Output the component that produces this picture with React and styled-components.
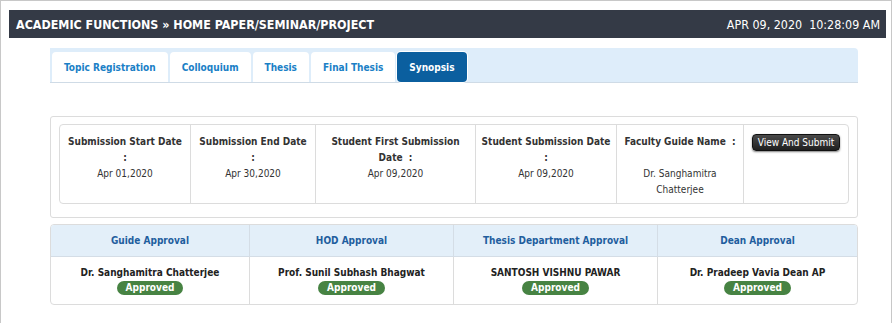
import React from 'react';
import styled, { createGlobalStyle } from 'styled-components';

const GlobalStyle = createGlobalStyle`
    body {
        margin: 0;
        background: #fff;
        font-family: "DejaVu Sans Condensed", "DejaVu Sans", Verdana, sans-serif;
        font-size: 10px;
        color: #333;
    }
`;

const tabs = ['Topic Registration', 'Colloquium', 'Thesis', 'Final Thesis', 'Synopsis'];

const approvals = [
    { title: 'Guide Approval', name: 'Dr. Sanghamitra Chatterjee' },
    { title: 'HOD Approval', name: 'Prof. Sunil Subhash Bhagwat' },
    { title: 'Thesis Department Approval', name: 'SANTOSH VISHNU PAWAR' },
    { title: 'Dean Approval', name: 'Dr. Pradeep Vavia Dean AP' },
];

const App = () => {
    return (
        <Frame>
            <GlobalStyle />
            <Header>
                <h1>ACADEMIC FUNCTIONS &raquo; HOME PAPER/SEMINAR/PROJECT</h1>
                <span>APR 09, 2020&nbsp;&nbsp;10:28:09 AM</span>
            </Header>

            <Content>
                <TabBar>
                    {tabs.map((t) => (
                        <Tab key={t} active={t === 'Synopsis'}>{t}</Tab>
                    ))}
                </TabBar>

                <Panel>
                    <InfoTable>
                        <InfoCell>
                            <b>Submission Start Date</b>
                            <b>:</b>
                            <span>Apr 01,2020</span>
                        </InfoCell>
                        <InfoCell>
                            <b>Submission End Date</b>
                            <b>:</b>
                            <span>Apr 30,2020</span>
                        </InfoCell>
                        <InfoCell>
                            <b>Student First Submission Date&nbsp; :</b>
                            <span>Apr 09,2020</span>
                        </InfoCell>
                        <InfoCell>
                            <b>Student Submission Date</b>
                            <b>:</b>
                            <span>Apr 09,2020</span>
                        </InfoCell>
                        <InfoCell>
                            <b>Faculty Guide Name&nbsp; :</b>
                            <span>&nbsp;</span>
                            <span className="name">Dr. Sanghamitra Chatterjee</span>
                        </InfoCell>
                        <InfoCell>
                            <SubmitButton>View And Submit</SubmitButton>
                        </InfoCell>
                    </InfoTable>
                </Panel>

                <ApprovalTable>
                    {approvals.map((a) => (
                        <ApprovalHead key={a.title}>{a.title}</ApprovalHead>
                    ))}
                    {approvals.map((a) => (
                        <ApprovalCell key={a.name}>
                            <b>{a.name}</b>
                            <Badge>Approved</Badge>
                        </ApprovalCell>
                    ))}
                </ApprovalTable>
            </Content>
        </Frame>
    );
};

const Frame = styled.div`
    width: 892px;
    min-height: 100vh;
    box-sizing: border-box;
    border: 1px solid #c8c8c8;
    border-bottom: none;
    padding: 9px 5px 0 8px;
`;

const Header = styled.div`
    height: 28px;
    background: #343a46;
    color: #fff;
    display: flex;
    align-items: center;
    justify-content: space-between;
    padding: 0 6px 0 7px;

    h1 {
        margin: 0;
        font-size: 12.4px;
        font-weight: bold;
    }

    span {
        font-size: 12.4px;
    }
`;

const Content = styled.div`
    margin: 0 28px 0 41px;
`;

const TabBar = styled.div`
    margin-top: 10px;
    height: 35px;
    box-sizing: border-box;
    background: #deedfa;
    border-bottom: 1px solid #cfdbe6;
    border-radius: 0 4px 0 0;
    padding: 4px 2px 0;
    display: flex;
    gap: 2px;
`;

const Tab = styled.div`
    height: 30px;
    box-sizing: border-box;
    padding: 0 12px;
    display: flex;
    align-items: center;
    font-weight: bold;
    font-size: 10px;
    background: ${(p) => (p.active ? '#0b5f9f' : '#fff')};
    color: ${(p) => (p.active ? '#fff' : '#1a80c6')};
    border-radius: ${(p) => (p.active ? '4px' : '4px 4px 0 0')};
    box-shadow: ${(p) => (p.active ? '0 0 0 1px #fff' : 'none')};
`;

const Panel = styled.div`
    margin-top: 33px;
    border: 1px solid #dcdcdc;
    border-radius: 3px;
    padding: 7px 8px 13px;
`;

const InfoTable = styled.div`
    display: grid;
    grid-template-columns: 131px 125px 160px 141px 127px 1fr;
    border: 1px solid #dcdcdc;
    border-radius: 4px;
    height: 80px;
    box-sizing: border-box;
`;

const InfoCell = styled.div`
    display: flex;
    flex-direction: column;
    align-items: center;
    text-align: center;
    padding: 9px 3px 0;
    line-height: 16px;
    border-right: 1px solid #dcdcdc;

    &:last-child {
        border-right: none;
    }

    .name {
        max-width: 90px;
    }
`;

const SubmitButton = styled.button`
    font-family: inherit;
    font-size: 10px;
    white-space: nowrap;
    color: #fff;
    background: linear-gradient(#4a4a4a, #1f1f1f);
    border: 1px solid #111;
    border-radius: 4px;
    padding: 0 5px;
    height: 17px;
    line-height: 14px;
    box-shadow: 0 1px 2px rgba(0, 0, 0, 0.5);
`;

const ApprovalTable = styled.div`
    margin-top: 6px;
    display: grid;
    grid-template-columns: 199px 204px 204px 1fr;
    grid-template-rows: 32px 47px;
    border: 1px solid #dcdcdc;
    border-radius: 4px;
    overflow: hidden;
`;

const ApprovalHead = styled.div`
    background: #e3eff9;
    color: #1f5e9e;
    font-weight: bold;
    display: flex;
    align-items: center;
    justify-content: center;
    border-right: 1px solid #d4dde6;
    border-bottom: 1px solid #d4dde6;

    &:nth-child(4) {
        border-right: none;
    }
`;

const ApprovalCell = styled.div`
    display: flex;
    flex-direction: column;
    align-items: center;
    padding-top: 10px;
    gap: 3px;
    color: #222;
    border-right: 1px solid #dcdcdc;

    &:last-child {
        border-right: none;
    }
`;

const Badge = styled.span`
    background: #478343;
    color: #fff;
    font-weight: bold;
    font-size: 10px;
    border-radius: 8px;
    padding: 0 9px;
    height: 14px;
    line-height: 14px;
`;

export default App;
